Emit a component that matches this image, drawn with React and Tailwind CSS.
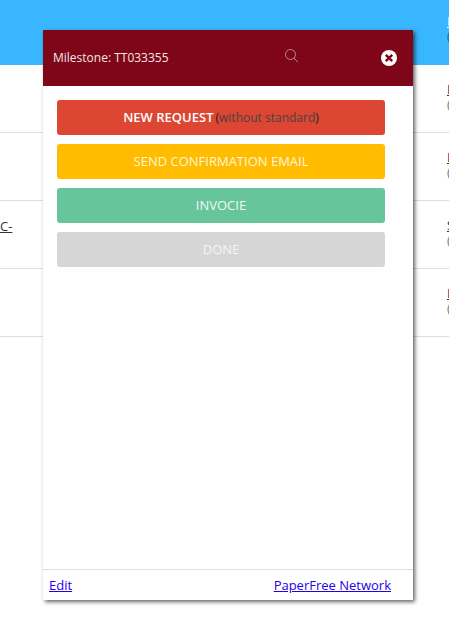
const rows = [
  { first: "", letter: "I" },
  { first: "", letter: "I" },
  { first: "C-", letter: "S" },
  { first: "", letter: "I" },
];

function BackgroundTable() {
  return (
    <div>
      <div className="h-[65px] bg-[#38b6ff] flex justify-end pt-[14px]">
        <div className="w-[2px] text-[13px] leading-[15px] overflow-hidden">
          <div className="underline text-white">I</div>
          <div className="text-[#2b5f80]">(</div>
        </div>
      </div>
      {rows.map((row, i) => (
        <div
          key={i}
          className="h-[68px] border-b border-[#ddd] flex justify-between items-start pt-[17px] text-[13px] leading-[15px] text-[#333]"
        >
          <span className="underline pt-[1px]">{row.first}</span>
          <div className="w-[2px] overflow-hidden">
            <div className="underline">{row.letter}</div>
            <div className="text-[#777]">(</div>
          </div>
        </div>
      ))}
    </div>
  );
}

function ActionButton({ className, children }) {
  return (
    <div className={`h-[35px] rounded-[3px] flex items-center justify-center text-[13px] ${className}`}>
      {children}
    </div>
  );
}

export default function App() {
  return (
    <div className="relative h-[638px] w-[449px] overflow-hidden bg-white font-['Open_Sans',sans-serif]">
      <BackgroundTable />
      <div className="absolute left-[43px] top-[30px] w-[370px] h-[570px] bg-white flex flex-col shadow-[2px_2px_4px_rgba(0,0,0,0.6)]">
        <div className="h-[56px] bg-[#7e0618] flex items-center pl-[10px] pr-[16px] shrink-0">
          <span className="text-[12px] text-[#f2e6e8] w-[232px]">Milestone: TT033355</span>
          <svg width="13" height="14" viewBox="0 0 13 14" fill="none" stroke="#b48c93" strokeWidth="1" className="mb-[4px]">
            <circle cx="5.5" cy="5.5" r="5" />
            <path d="M9 9 L13 13.5" />
          </svg>
          <svg width="16" height="16" viewBox="0 0 16 16" className="ml-auto">
            <circle cx="8" cy="8" r="8" fill="#fff" />
            <path d="M4.8 4.8 L11.2 11.2 M11.2 4.8 L4.8 11.2" stroke="#7e0618" strokeWidth="2.4" />
          </svg>
        </div>
        <div className="flex-1 pl-[14px] pr-[28px] pt-[14px] flex flex-col gap-[9px]">
          <ActionButton className="bg-[#dd4632] text-white">
            <span className="font-semibold">NEW REQUEST</span>
            <span className="text-[12px] text-[#222] ml-[2px]">(<span className="text-[#444]">without standard</span>)</span>
          </ActionButton>
          <ActionButton className="bg-[#ffbc00] text-[#fff6dc]">SEND CONFIRMATION EMAIL</ActionButton>
          <ActionButton className="bg-[#67c59c] text-[#f0faf5]">INVOCIE</ActionButton>
          <ActionButton className="bg-[#d6d6d6] text-[#f5f5f5]">DONE</ActionButton>
        </div>
        <div className="h-[31px] border-t border-[#ddd] flex items-center justify-between pl-[6px] pr-[22px] pt-[1px] text-[13px] text-[#2200ee] shrink-0">
          <a className="underline" href="#">Edit</a>
          <a className="underline" href="#">PaperFree Network</a>
        </div>
      </div>
    </div>
  );
}
